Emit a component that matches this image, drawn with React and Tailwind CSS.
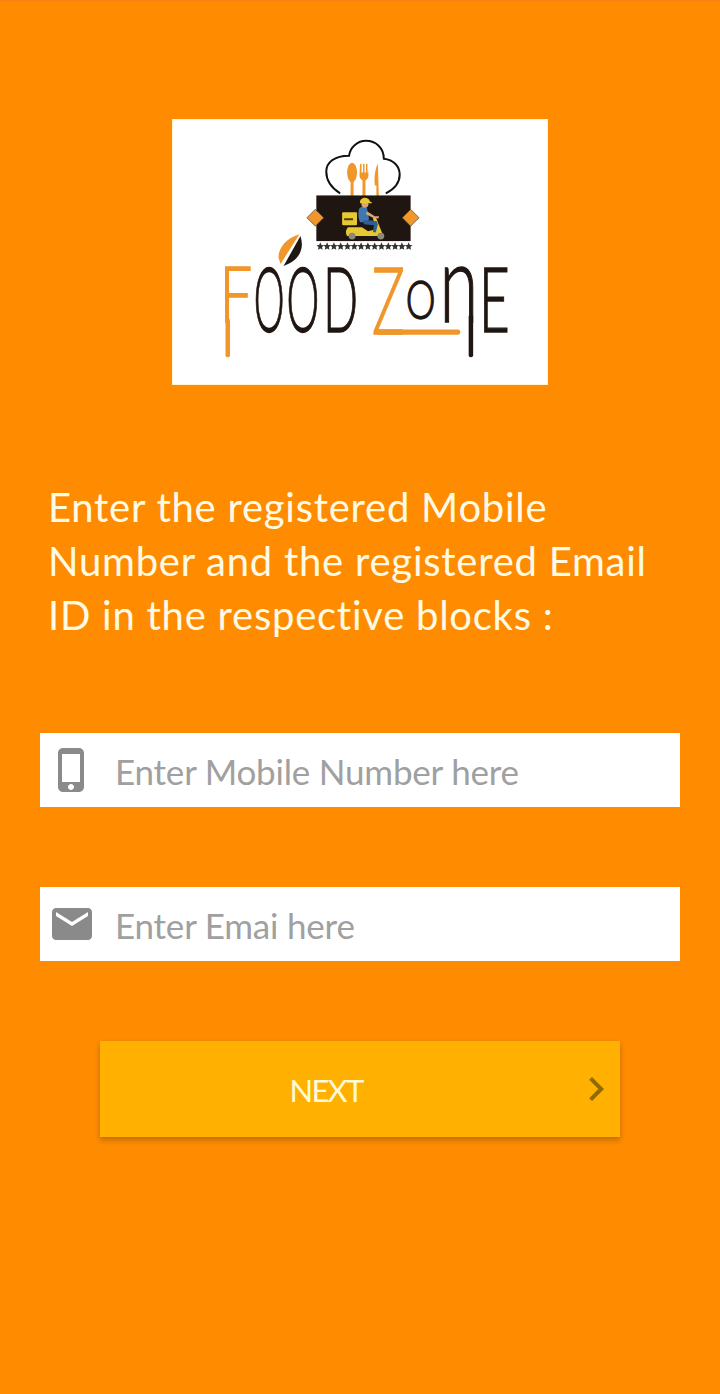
const ORANGE = "#f0962a";
const DARK = "#1f1511";

// one wordmark letter, squeezed to the box it has in the logo
function Letter({ ch, x, w, bottom, size, color = DARK }) {
    return (
        <text
            x={x}
            y={bottom}
            fontSize={size}
            fontWeight={300}
            fontFamily="Lato, sans-serif"
            fill={color}
            stroke={color}
            strokeWidth="1.400"
            textLength={w}
            lengthAdjust="spacingAndGlyphs"
        >
            {ch}
        </text>
    );
}

function Logo() {
    const stars = Array.from({ length: 14 }, (_, i) => 148 + i * 6.85);

    return (
        <svg viewBox="0 0 376 266" className="w-full h-full">
            {/* chef hat */}
            <path
                d="M168 74C160 69 154 61 154 52C154 43 162 36 177 36C178 27 186 21 194 21C204 21 212 28 212 39C222 40 228 47 228 55C228 64 222 70 214 74"
                fill="#fff"
                stroke="#111"
                strokeWidth="2"
            />
            {/* spoon, fork, knife */}
            <ellipse cx="180" cy="53" rx="5" ry="10" fill={ORANGE} />
            <rect x="178.500" y="60" width="3" height="17" fill={ORANGE} />
            <path d="M188 44h1.500v9h1.500v-9h1.500v9h1.500v-9h1.500v9h1v3c0 3-2 4-3 5v16h-3V61c-1-1-3-2-3-5z" fill={ORANGE} />
            <path d="M206 44c-3 6-4 14-3 22h1.500v11h2.500z" fill={ORANGE} />

            {/* black band with diamonds */}
            <rect x="144" y="76" width="95" height="46" fill={DARK} />
            <path d="M143 90l8.500 8.500-8.500 8.500-8.500-8.500z" fill={ORANGE} stroke="#333" strokeWidth="0.600" />
            <path d="M239 90l8.500 8.500-8.500 8.500-8.500-8.500z" fill={ORANGE} stroke="#333" strokeWidth="0.600" />

            {/* delivery rider */}
            <rect x="170" y="93" width="15" height="13" rx="1" fill="#e8c832" />
            <rect x="172" y="99" width="9" height="2" fill="#4b3b10" />
            <path d="M176 108h14l6 4 8-2-3-11 3-1 6 15 2 4h-37c-2-4-1-7 1-9z" fill="#e8c832" />
            <path d="M187 90c1-3 6-4 8-1l2 10-1 4h-8c-2-4-2-9-1-13z" fill="#3f78b0" />
            <path d="M191 101h6l8 1 1 3-2 8h-3l1-7-10-1z" fill="#2f5f95" />
            <path d="M195 92l8 5h4v2h-5l-8-4z" fill="#d9a679" />
            <circle cx="193" cy="85" r="3.500" fill="#d9a679" />
            <path d="M188 83c0-6 9-6 10-1l2 1v1h-12z" fill="#e8c832" />
            <circle cx="180" cy="117" r="3.500" fill="#8a8a7a" />
            <circle cx="209" cy="117" r="3.500" fill="#8a8a7a" />

            {/* row of stars */}
            {stars.map((x) => (
                <path
                    key={x}
                    transform={`translate(${x} 127) scale(1.25)`}
                    d="M0-3l.9 2.100 2.200.200-1.700 1.500.5 2.200L0 1.900-1.900 3l.5-2.200-1.700-1.500 2.200-.200z"
                    fill="#333"
                />
            ))}

            {/* leaf */}
            <path d="M127 115C113 119 105 130 106 139L108 145z" fill={ORANGE} />
            <path d="M128 117C132 129 128 141 111 147z" fill={DARK} />

            {/* wordmark */}
            <Letter ch="F" x={46.5} w={33} bottom={204} size={78} color={ORANGE} />
            <rect x="52.500" y="200" width="4.500" height="39" rx="2" fill={ORANGE} />
            <Letter ch="O" x={81} w={31} bottom={214} size={92} />
            <Letter ch="O" x={114} w={33} bottom={214} size={92} />
            <Letter ch="D" x={151} w={35} bottom={214} size={92} />
            <Letter ch="Z" x={200} w={33} bottom={216} size={94} color={ORANGE} />
            <rect x="204" y="211" width="85" height="5.500" rx="2.500" fill={ORANGE} />
            <Letter ch="O" x={234} w={30} bottom={201} size={54} />
            <Letter ch="n" x={268} w={39} bottom={204} size={110} />
            <rect x="297.500" y="196" width="4.500" height="43" rx="2" fill={DARK} />
            <Letter ch="E" x={308} w={31} bottom={214} size={92} />
        </svg>
    );
}

function PhoneIcon() {
    return (
        <svg viewBox="0 0 24 24" className="w-12 h-12 shrink-0" fill="#8a8a8a">
            <path d="M15.500 1h-8C6.120 1 5 2.120 5 3.500v17C5 21.880 6.120 23 7.500 23h8c1.380 0 2.500-1.120 2.500-2.500v-17C18 2.120 16.880 1 15.500 1zm-4 21c-.83 0-1.500-.67-1.500-1.500s.67-1.500 1.500-1.500 1.500.67 1.500 1.500-.67 1.500-1.500 1.500zm4.500-4H7V4h9v14z" />
        </svg>
    );
}

function MailIcon() {
    return (
        <svg viewBox="0 0 24 24" className="w-12 h-12 shrink-0" fill="#8a8a8a">
            <path d="M20 4H4c-1.100 0-1.990.9-1.990 2L2 18c0 1.100.9 2 2 2h16c1.100 0 2-.9 2-2V6c0-1.100-.9-2-2-2zm0 4l-8 5-8-5V6l8 5 8-5v2z" />
        </svg>
    );
}

function Field({ icon, placeholder, type }) {
    return (
        <div className="flex items-center gap-5 h-[74px] pl-2 bg-white">
            {icon}
            <input
                type={type}
                placeholder={placeholder}
                className="flex-1 min-w-0 pt-0.5 -ml-px bg-transparent outline-none text-[35px] tracking-[-0.2px] text-[#a0a0a0] placeholder:text-[#a0a0a0]"
            />
        </div>
    );
}

export default function App() {
    return (
        <div className="min-h-[1394px] bg-[#ff8c00] border-t-2 border-[#fb8114] font-['Lato',sans-serif]">
            <div className="w-[376px] h-[266px] mx-auto mt-[117px] bg-white border border-[#fff4d2]">
                <Logo />
            </div>

            <p className="mt-[95px] ml-12 text-[40px] leading-[54px] tracking-[0.75px] whitespace-nowrap text-[#fffae6]">
                Enter the registered Mobile
                <br />
                Number and the registered Email
                <br />
                ID in the respective blocks :
            </p>

            <div className="mt-[91px] mx-10 flex flex-col gap-20">
                <Field icon={<PhoneIcon />} type="tel" placeholder="Enter Mobile Number here" />
                <Field icon={<MailIcon />} type="email" placeholder="Enter Emai here" />
            </div>

            <button className="flex items-center w-[520px] h-24 mt-20 mx-auto bg-[#ffb000] shadow-[0_3px_6px_rgba(0,0,0,0.25)]">
                <span className="flex-1 pt-0.5 pr-5 text-center text-[31px] tracking-[-1.8px] text-[#fffbd9]">NEXT</span>
                <svg viewBox="0 0 24 24" className="w-12 h-12 shrink-0" fill="#8f6a00">
                    <path d="M10 6L8.590 7.410 13.170 12l-4.580 4.590L10 18l6-6z" />
                </svg>
            </button>
        </div>
    );
}
